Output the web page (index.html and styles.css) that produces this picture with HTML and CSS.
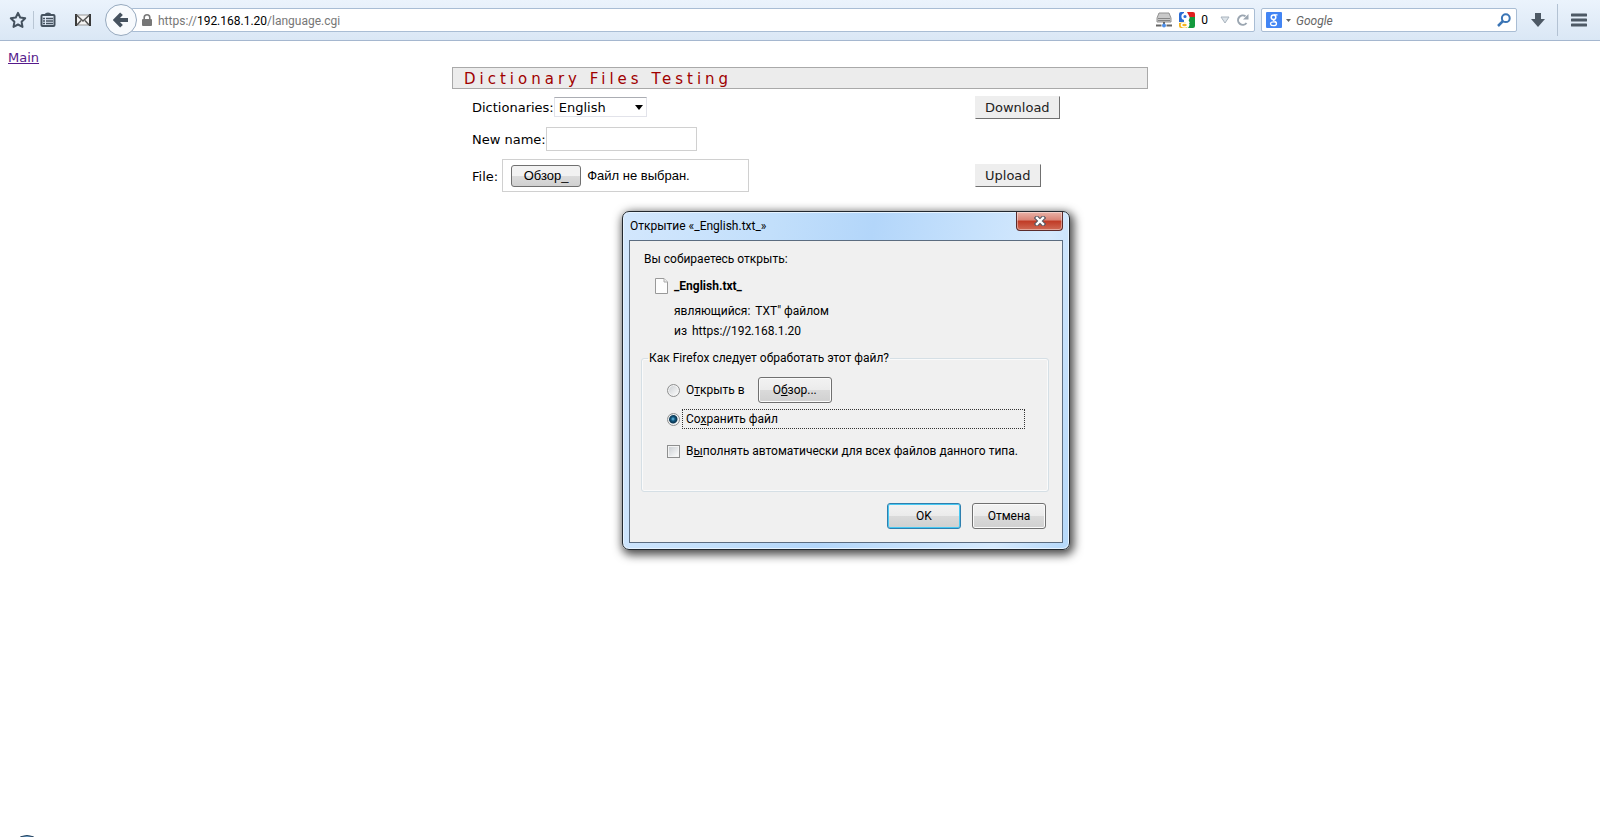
FILE: index.html
```
<!DOCTYPE html>
<html lang="ru">
<head>
  <meta charset="UTF-8">
  <meta name="viewport" content="width=device-width, initial-scale=1.0">
  <title>Dictionary Files Testing</title>
  <link rel="stylesheet" href="styles.css">
</head>
<body>
  <!-- Browser toolbar -->
  <header class="toolbar">
    <div class="tools">
      <button class="tool bordered" aria-label="Bookmark">
        <svg width="18" height="18" viewBox="0 0 18 18"><path d="M9 1.8l2.2 4.7 5 .7-3.6 3.6.9 5.1L9 13.5l-4.5 2.4.9-5.1L1.8 7.2l5-.7z" fill="none" stroke="#45525f" stroke-width="2" stroke-linejoin="round"/></svg>
      </button>
      <button class="tool" aria-label="Bookmarks list">
        <svg width="16" height="16" viewBox="0 0 16 16"><path d="M2.5 3h11q1 0 1 1v9q0 1-1 1h-11q-1 0-1-1V4q0-1 1-1z" fill="none" stroke="#45525f" stroke-width="2"/><path d="M5 3q0-2 3-2t3 2z" fill="#45525f" stroke="#45525f"/><path d="M3 6.5h2M6 6.5h7M3 9h2M6 9h7M3 11.5h2M6 11.5h7" stroke="#45525f" stroke-width="1.3"/></svg>
      </button>
      <button class="tool mail" aria-label="Mail">
        <svg width="16" height="12" viewBox="0 0 16 12"><path d="M1 1h14v10H1z" fill="#f4f4f4" stroke="#999"/><path d="M1 0v12M15 0v12" stroke="#3a3a3a" stroke-width="2"/><path d="M1.500 1l6.500 6 6.500-6M2 11l4-4.500M14 11l-4-4.500" fill="none" stroke="#555" stroke-width="1.500"/></svg>
      </button>
    </div>

    <button class="back" aria-label="Back">
      <svg width="16" height="16" viewBox="0 0 16 16"><path d="M8.500 1.800L2.500 8l6 6.200M3 8h12" fill="none" stroke="#45525f" stroke-width="3.800"/></svg>
    </button>
    <div class="urlbar">
      <svg width="10" height="12" viewBox="0 0 10 12"><path d="M2.200 6V3.600a2.800 2.800 0 0 1 5.600 0V6" fill="none" stroke="#777" stroke-width="1.600"/><rect y="5" width="10" height="7" rx="1" fill="#777"/></svg>
      <span class="url">https://<b>192.168.1.20</b>/language.cgi</span>
      <div class="url-icons">
        <svg width="16" height="16" viewBox="0 0 16 16"><path d="M3 1h10l2 5v4H1V6z" fill="#c9c9c9" stroke="#929292"/><path d="M2 6.500h12M2 8.500h12" stroke="#858585"/><path d="M0 13.500h5.500M10.500 13.500H16M8 10v2" stroke="#666" stroke-width="2"/><circle cx="8" cy="13.500" r="2" fill="#4e8fe8"/></svg>
        <svg class="pagerank" width="16" height="16" viewBox="0 0 16 16"><rect width="16" height="16" rx="2" fill="#fff"/><path d="M2 0h3v10H0V2q0-2 2-2z" fill="#2b6cd4"/><path d="M8 0h6q2 0 2 2v4h-5z" fill="#e02020"/><path d="M11 5h5v9q0 2-2 2H9q3-4 0-6z" fill="#139a3d"/><path d="M0 11l6-1q4 3 2 6H2q-2 0-2-2z" fill="#f3b51e"/><circle cx="6" cy="4.500" r="2.600" fill="#2b6cd4" stroke="#fff" stroke-width="2"/><path d="M7 8q2 1 3 3" stroke="#fff" stroke-width="2" fill="none"/><ellipse cx="5.500" cy="13" rx="3" ry="2" fill="#f3b51e" stroke="#fff" stroke-width="1.500"/></svg>
        <span class="rank">0</span>
        <svg class="dropmark" width="10" height="8" viewBox="0 0 10 8"><path d="M1 1h8L5 7z" fill="#dce3e9" stroke="#a9b4be"/></svg>
        <svg width="12" height="12" viewBox="0 0 12 12"><path d="M8.500 2.300A4.700 4.700 0 1 0 9.500 9" fill="none" stroke="#9ba6b1" stroke-width="2"/><path d="M11.500 0v5.500H6z" fill="#9ba6b1"/></svg>
      </div>
    </div>
    <div class="searchbar">
      <svg width="16" height="16" viewBox="0 0 16 16"><rect width="16" height="16" rx="1" fill="#4285f4"/><circle cx="7.500" cy="5.200" r="2.300" fill="none" stroke="#fff" stroke-width="1.500"/><ellipse cx="7.500" cy="11.800" rx="3" ry="1.900" fill="none" stroke="#fff" stroke-width="1.300"/><path d="M8 2.800h3.500M7 7.500q0 1.200 1.500 1.500t2 2" fill="none" stroke="#fff" stroke-width="1.200"/></svg>
      <svg class="engine" width="5" height="3" viewBox="0 0 5 3"><path d="M0 0h5L2.500 3z" fill="#666"/></svg>
      <input type="text" placeholder="Google" aria-label="Search">
      <svg width="14" height="14" viewBox="0 0 14 14"><circle cx="8.800" cy="5.200" r="3.900" fill="none" stroke="#3b75b5" stroke-width="2"/><path d="M6 8l-5 5" stroke="#3b75b5" stroke-width="2.500"/></svg>
    </div>
    <button class="tool downloads" aria-label="Downloads">
      <svg width="14" height="14" viewBox="0 0 14 14"><path d="M4 0h6v6h4l-7 8-7-8h4z" fill="#4d5965"/></svg>
    </button>
    <button class="tool menu" aria-label="Menu">
      <svg width="16" height="14" viewBox="0 0 16 14"><path d="M1 2h14M1 7h14M1 12h14" stroke="#4d5965" stroke-width="3" stroke-linecap="round"/></svg>
    </button>
  </header>

  <main>
    <a class="main-link" href="#">Main</a>

    <form class="dictionary">
      <h1>Dictionary Files Testing</h1>
      <div class="row">
        <div class="field">
          <label for="dict">Dictionaries:</label>
          <div class="select">
            <select id="dict"><option>English</option></select>
            <svg width="8" height="5" viewBox="0 0 8 5"><path d="M0 0h8L4 5z"/></svg>
          </div>
        </div>
        <button class="submit" type="button">Download</button>
      </div>
      <div class="row name-row">
        <div class="field">
          <label for="name">New name:</label>
          <input class="name" id="name" type="text">
        </div>
      </div>
      <div class="row file-row">
        <div class="field wide">
          <label for="browse">File:</label>
          <div class="file">
            <button class="browse" id="browse" type="button">Обзор_</button>
            <span>Файл не выбран.</span>
          </div>
        </div>
        <button class="submit" type="button">Upload</button>
      </div>
    </form>
  </main>

  <!-- Download dialog -->
  <div class="dialog" role="dialog" aria-labelledby="dialog-title">
    <div class="titlebar">
      <span id="dialog-title">Открытие «_English.txt_»</span>
      <button class="close" aria-label="Закрыть">
        <svg width="12" height="10" viewBox="0 0 12 10"><path d="M3 2l6 6M9 2L3 8" stroke="#575761" stroke-width="4.500" stroke-linecap="square"/><path d="M3 2l6 6M9 2L3 8" stroke="#fff" stroke-width="2.400" stroke-linecap="square"/></svg>
      </button>
    </div>
    <div class="content">
      <p class="intro">Вы собираетесь открыть:</p>
      <div class="filename">
        <svg width="13" height="16" viewBox="0 0 13 16"><path d="M.5.5h8.500l3.500 3.500v11.500H.5z" fill="#fdfdfd" stroke="#999"/><path d="M9 .5V4h3.500" fill="#eee" stroke="#aaa"/></svg>
        <strong>_English.txt_</strong>
      </div>
      <p class="detail">являющийся: <span>TXT" файлом</span></p>
      <p class="detail">из <span>https://192.168.1.20</span></p>

      <fieldset>
        <legend>Как Firefox следует обработать этот файл?</legend>
        <div class="option open">
          <input type="radio" name="action" id="open">
          <label for="open">О<u>т</u>крыть в</label>
          <button class="win-button" type="button">О<u>б</u>зор...</button>
        </div>
        <div class="option">
          <input type="radio" name="action" id="save" checked>
          <label class="focused" for="save">Со<u>х</u>ранить файл</label>
        </div>
        <div class="option always">
          <input type="checkbox" id="always">
          <label for="always">В<u>ы</u>полнять автоматически для всех файлов данного типа.</label>
        </div>
      </fieldset>

      <div class="actions">
        <button class="win-button default">OK</button>
        <button class="win-button">Отмена</button>
      </div>
    </div>
  </div>

  <div class="orb"></div>
</body>
</html>
```

FILE: styles.css
```
:root {
  --ui: Roboto, "Noto Sans", sans-serif;
  --page: "DejaVu Sans", sans-serif;
}
* {
  box-sizing: border-box;
}
body {
  margin: 0;
  background: #fff;
  color: #000;
  font: 13px/20px var(--page);
}
button, input, select {
  font: inherit;
  color: inherit;
  margin: 0;
}
svg {
  display: block;
  flex-shrink: 0;
}

/* Browser toolbar */
.toolbar {
  display: flex;
  align-items: center;
  height: 41px;
  background: linear-gradient(#ebf3fc, #dae7f5);
  border-bottom: 1px solid #a5b7cf;
  font: 12px/16px var(--ui);
}
.tools {
  display: flex;
  width: 105px;
  padding-left: 2px;
}
.tool {
  display: flex;
  align-items: center;
  justify-content: center;
  width: 28px;
  height: 18px;
  padding: 0;
  border: 0;
  background: none;
}
.bordered {
  width: 32px;
  border-right: 1px solid #b9c6d4;
}
.mail {
  margin-left: 5px;
  width: 32px;
}
.back {
  display: flex;
  align-items: center;
  justify-content: center;
  width: 32px;
  height: 32px;
  padding: 0;
  border: 1px solid #96a9be;
  border-radius: 50%;
  background: #f7fafd;
  z-index: 1;
}
.urlbar, .searchbar {
  display: flex;
  align-items: center;
  height: 24px;
  background: #fff;
  border: 1px solid #a9bdd4;
  border-radius: 2px;
}
.urlbar {
  flex: 1;
  margin-left: -6px;
  padding: 0 5px 0 10px;
}
.url {
  margin-left: 6px;
  padding-top: 2px;
  color: #777;
}
.url b {
  font-weight: normal;
  color: #000;
}
.url-icons {
  display: flex;
  align-items: center;
  margin-left: auto;
}
.pagerank {
  margin: 0 6px 0 7px;
}
.dropmark {
  margin: 0 7px 0 12px;
}
.searchbar {
  width: 256px;
  margin: 0 8px 0 6px;
  padding: 0 5px 0 4px;
}
.engine {
  margin: 0 5px 0 4px;
}
.searchbar input {
  flex: 1;
  min-width: 0;
  padding: 2px 0 0;
  border: 0;
  background: none;
  font-style: italic;
}
.searchbar input::placeholder {
  color: #666;
}
.downloads {
  width: 26px;
}
.menu {
  margin-left: 6px;
  width: 43px;
  height: 32px;
  border-left: 1px solid #b3c2d3;
}

/* Page */
main {
  padding: 7px 8px;
}
.main-link {
  display: block;
  width: max-content;
  color: #551a8b;
  line-height: 19px;
}
.dictionary {
  width: 696px;
  margin: 0 auto;
}
h1 {
  margin: 0;
  padding: 2px 0 0 11px;
  border: 1px solid #a9a9a9;
  background: #ececec;
  color: #a00000;
  font: 15px/18px var(--page);
  letter-spacing: 4px;
}
.row {
  display: grid;
  grid-template-columns: 503px auto;
  align-items: center;
  justify-content: start;
  justify-items: start;
  padding-left: 20px;
  height: 36px;
}
.name-row {
  height: 28px;
}
.file-row {
  height: 45px;
}
.field {
  display: flex;
  align-items: center;
}
.field label {
  padding-top: 2px;
}
.wide {
  gap: 4px;
}
.select {
  position: relative;
}
.select select {
  appearance: none;
  display: block;
  width: 93px;
  height: 20px;
  padding: 0 4px;
  border: 1px solid #e2e3ea;
  border-top-color: #abadb3;
  border-radius: 0;
  background: #fff;
}
.select svg {
  position: absolute;
  right: 4px;
  top: 8px;
}
.name {
  width: 151px;
  height: 24px;
  border: 1px solid #d0d0d0;
}
.file {
  display: flex;
  align-items: center;
  gap: 6px;
  width: 247px;
  height: 33px;
  padding-left: 8px;
  border: 1px solid #d0d0d0;
  font-family: "Liberation Sans", sans-serif;
}
.browse {
  width: 70px;
  height: 22px;
  padding: 0;
  border: 1px solid #707070;
  border-radius: 3px;
  background: linear-gradient(#f2f2f2 50%, #dcdcdc 50%, #d0d0d0);
}
.submit {
  height: 23px;
  padding: 1px 9px 0;
  border: 1px solid #eee;
  border-right-color: #707070;
  border-bottom-color: #707070;
  background: #eee;
  color: #222;
}

/* Dialog window */
.dialog {
  position: absolute;
  top: 211px;
  left: calc(50% - 178px);
  width: 448px;
  padding: 0 6px 6px;
  border: 1px solid #22282f;
  border-radius: 7px;
  background: linear-gradient(100deg, #d3e7fd, #c2dffb 30%, #b3d6fa 50%, #c6e1fc 70%, #d5e9fd 85%, #b5d8fa);
  box-shadow: inset 0 0 0 1px #e6f3ff, 2px 3px 10px 2px rgba(0, 0, 0, 0.7);
  font: 12px/16px var(--ui);
}
.titlebar {
  display: flex;
  align-items: flex-start;
  justify-content: space-between;
  height: 28px;
}
.titlebar span {
  padding: 6px 0 0 1px;
}
.close {
  display: flex;
  align-items: center;
  justify-content: center;
  width: 47px;
  height: 19px;
  padding: 0;
  border: 1px solid #5b2b2b;
  border-top: 0;
  border-radius: 0 0 4px 4px;
  background: linear-gradient(#e9b3a8, #d98476 45%, #c03a25 50%, #d06a55);
  box-shadow: inset 0 0 0 1px rgba(255, 255, 255, 0.4);
}
.content {
  padding: 10px 13px 13px 11px;
  border: 1px solid #5b6c80;
  background: #f0f0f0;
}
.content p {
  margin: 0;
}
.content .intro {
  padding-left: 3px;
}
.filename {
  display: flex;
  align-items: center;
  gap: 6px;
  margin: 11px 0 9px 14px;
}
.content .detail {
  padding-left: 33px;
  margin-bottom: 4px;
}
.detail span {
  margin-left: 2px;
}
fieldset {
  min-width: 0;
  height: 142px;
  margin: 11px 0 11px;
  padding: 11px 23px 0 25px;
  border: 1px solid #d5dfe5;
  border-radius: 3px;
  box-shadow: inset 0 0 0 1px #fafafa;
}
legend {
  margin-left: -19px;
  padding: 0 1px;
}
.option {
  display: flex;
  align-items: center;
  gap: 2px;
  margin-bottom: 12px;
}
.option.open {
  height: 26px;
  margin-bottom: 6px;
}
.option input {
  appearance: none;
  flex-shrink: 0;
  width: 13px;
  height: 13px;
  border: 1px solid #8e8f8f;
  background: linear-gradient(135deg, #c8ccd0, #fff);
  box-shadow: inset 0 0 0 1px #f4f4f4;
}
.option input[type="radio"] {
  border-radius: 50%;
}
.option input[type="radio"]:checked {
  background: radial-gradient(circle at 5px 5px, #6fc8f0, #12577f 2px, #0b3550 4px, #e8edf0 5px);
}
.option label {
  padding: 1px 3px;
  border: 1px solid transparent;
  white-space: nowrap;
}
.option .focused {
  flex: 1;
  height: 20px;
  border: 1px dotted #333;
}
.win-button {
  width: 74px;
  height: 26px;
  padding: 0;
  border: 1px solid #707070;
  border-radius: 3px;
  background: linear-gradient(#f2f2f2, #ebebeb 50%, #dadada 50%, #d0d0d0);
  box-shadow: inset 0 0 0 1px #fafafa;
}
.open .win-button {
  margin-left: 7px;
}
.default {
  border-color: #2f7fae;
  box-shadow: inset 0 0 0 1px #47c8f2;
}
.actions {
  display: flex;
  justify-content: flex-end;
  gap: 11px;
  padding-right: 3px;
}

/* Round button peeking from below the window */
.orb {
  position: fixed;
  bottom: -30px;
  left: 11px;
  width: 32px;
  height: 32px;
  border: 1px solid #23405c;
  border-radius: 50%;
  background: #6f9fc8;
}
```
